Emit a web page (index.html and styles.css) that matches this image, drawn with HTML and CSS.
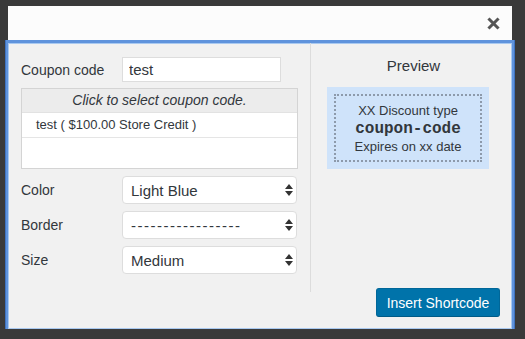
FILE: index.html
```html
<!DOCTYPE html>
<html lang="en">
<head>
    <meta charset="UTF-8">
    <title>Insert Coupon Shortcode</title>
    <link rel="stylesheet" href="styles.css">
</head>
<body>
    <div class="modal">
        <div class="modal-header">
            <button class="close-btn" type="button" aria-label="Close">
                <svg width="13" height="13" viewBox="0 0 13 13">
                    <path d="M2.5 2.5 L10.5 10.5 M10.5 2.5 L2.5 10.5" stroke="#555" stroke-width="3" stroke-linecap="square"/>
                </svg>
            </button>
        </div>

        <div class="modal-body">
            <!-- Formulario de la izquierda -->
            <div class="form-pane">
                <div class="form-row">
                    <label for="coupon_code">Coupon code</label>
                    <input type="text" id="coupon_code" value="test">
                </div>

                <div class="coupon-list">
                    <div class="list-head">Click to select coupon code.</div>
                    <div class="list-item">test ( $100.00 Store Credit )</div>
                </div>

                <div class="form-row select-row">
                    <label for="color">Color</label>
                    <div class="select-wrap">
                        <select id="color">
                            <option>Light Blue</option>
                        </select>
                        <svg class="arrows" width="8" height="14" viewBox="0 0 8 14"><path d="M4 1 L8 6 L0 6 Z M0 8 L8 8 L4 13 Z" fill="#333"/></svg>
                    </div>
                </div>

                <div class="form-row select-row">
                    <label for="border">Border</label>
                    <div class="select-wrap">
                        <select id="border" class="dashes">
                            <option>-----------------</option>
                        </select>
                        <svg class="arrows" width="8" height="14" viewBox="0 0 8 14"><path d="M4 1 L8 6 L0 6 Z M0 8 L8 8 L4 13 Z" fill="#333"/></svg>
                    </div>
                </div>

                <div class="form-row select-row">
                    <label for="size">Size</label>
                    <div class="select-wrap">
                        <select id="size">
                            <option>Medium</option>
                        </select>
                        <svg class="arrows" width="8" height="14" viewBox="0 0 8 14"><path d="M4 1 L8 6 L0 6 Z M0 8 L8 8 L4 13 Z" fill="#333"/></svg>
                    </div>
                </div>
            </div>

            <!-- Vista previa -->
            <div class="preview-pane">
                <h3>Preview</h3>
                <div class="coupon-preview">
                    <div class="coupon-inner">
                        <div>XX Discount type</div>
                        <div class="code">coupon-code</div>
                        <div>Expires on xx date</div>
                    </div>
                </div>
                <button type="button" class="insert-btn">Insert Shortcode</button>
            </div>
        </div>
    </div>
</body>
</html>
```

FILE: styles.css
```css
body {
    margin: 0;
    padding-top: 6px;
    background-color: #3a3a3a;
    font-family: "Liberation Sans", Arial, sans-serif;
    color: #32373c;
}
.modal {
    width: 504px;
    margin-left: 8px;
}
.modal-header {
    height: 37px;
    background-color: #fcfcfc;
    display: flex;
    justify-content: flex-end;
    align-items: flex-start;
}
.close-btn {
    border: none;
    background: none;
    padding: 0;
    margin: 11px 12px 0 0;
    width: 13px;
    height: 13px;
    cursor: pointer;
}
.close-btn svg {
    display: block;
}
.modal-body {
    height: 286px;
    display: flex;
    align-items: flex-start;
    background-color: #f1f1f1;
    box-shadow: 0 -1px 0 2px #5f93dc, 0 0 0 3px #3f73c0, inset 0 0 0 1px #a9c9f0;
}
.form-pane {
    width: 277px;
    height: 235px;
    padding: 14px 12px 0 13px;
    border-right: 1px solid #dcdcdc;
}
.form-row {
    display: flex;
    align-items: center;
}
.form-row label {
    width: 101px;
    font-size: 14px;
    color: #32373c;
}
input[type="text"] {
    width: 159px;
    height: 25px;
    box-sizing: border-box;
    border: 1px solid #ddd;
    background: #fff;
    padding: 0 6px;
    font-family: inherit;
    font-size: 15px;
    color: #32373c;
}
.coupon-list {
    margin-top: 6px;
    height: 81px;
    box-sizing: border-box;
    border: 1px solid #d4d4d4;
    background: #fff;
    font-size: 13px;
}
.list-head {
    height: 23px;
    line-height: 23px;
    background-color: #ececec;
    text-align: center;
    font-style: italic;
    font-size: 14px;
    border-bottom: 1px solid #e2e2e2;
}
.list-item {
    height: 24px;
    line-height: 24px;
    padding-left: 14px;
    border-bottom: 1px solid #e5e5e5;
}
.select-row {
    margin-top: 7px;
}
.select-wrap {
    position: relative;
    width: 175px;
}
select {
    -webkit-appearance: none;
    appearance: none;
    width: 100%;
    height: 28px;
    box-sizing: border-box;
    border: 1px solid #ddd;
    border-radius: 4px;
    background: #fff;
    padding: 0 8px;
    font-family: inherit;
    font-size: 15px;
    color: #32373c;
}
select.dashes {
    letter-spacing: 1.5px;
}
.arrows {
    position: absolute;
    right: 4px;
    top: 7px;
}
.preview-pane {
    flex: 1;
    height: 286px;
    box-sizing: border-box;
    padding: 14px 12px 12px 16px;
    display: flex;
    flex-direction: column;
}
.preview-pane h3 {
    margin: 0;
    font-size: 15px;
    font-weight: normal;
    line-height: 18px;
    text-align: center;
}
.coupon-preview {
    margin-top: 12px;
    width: 162px;
    height: 82px;
    box-sizing: border-box;
    padding: 7px;
    background-color: #cfe3fa;
}
.coupon-inner {
    height: 100%;
    box-sizing: border-box;
    border: 2px dotted #8d9aab;
    text-align: center;
    font-size: 13px;
    line-height: 18px;
    padding-top: 6px;
    color: #32373c;
}
.code {
    font-family: "Liberation Mono", "Courier New", monospace;
    font-weight: bold;
    font-size: 16px;
}
.insert-btn {
    margin-top: auto;
    align-self: flex-end;
    width: 124px;
    height: 29px;
    background-color: #0073aa;
    border: 1px solid #006799;
    border-bottom-color: #005b87;
    border-radius: 3px;
    color: #fff;
    font-family: inherit;
    font-size: 14px;
    cursor: pointer;
}
```
